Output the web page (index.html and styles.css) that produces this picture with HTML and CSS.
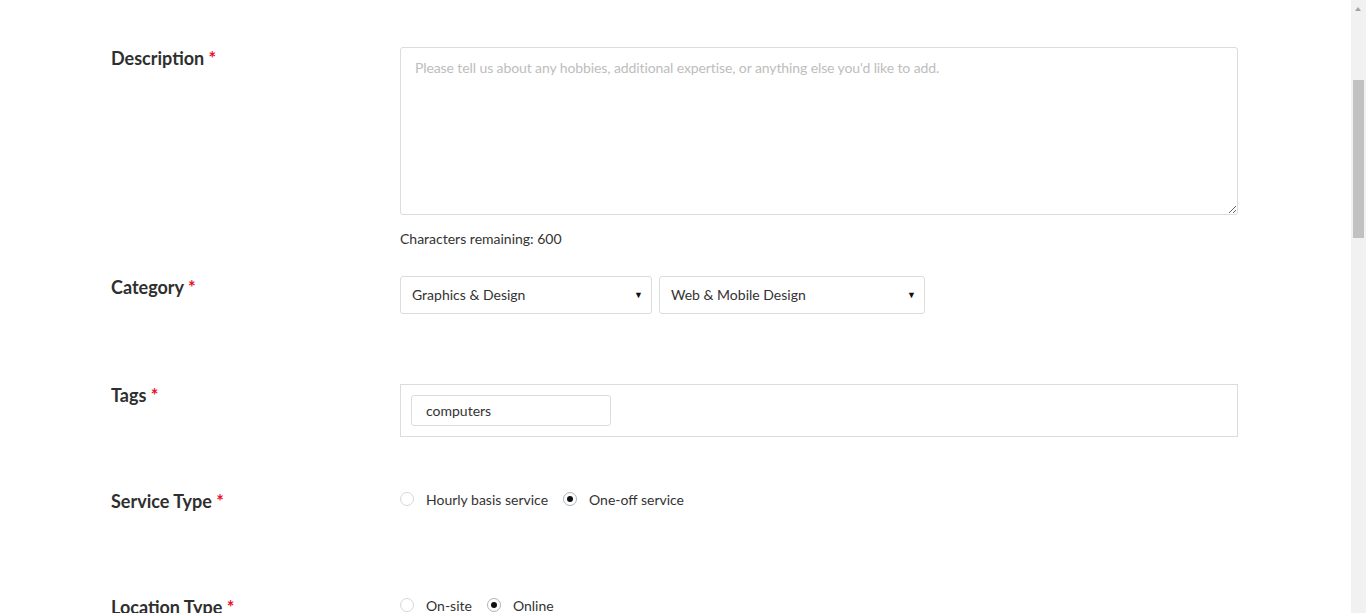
FILE: index.html
```html
<!DOCTYPE html>
<html lang="en">
<head>
<meta charset="utf-8">
<title>Service form</title>
<link rel="stylesheet" href="styles.css">
</head>
<body>
<div class="page">
  <form class="form">
    <div class="row row-desc">
      <div class="label">Description <span class="req">*</span></div>
      <div class="field">
        <textarea class="textarea" placeholder="Please tell us about any hobbies, additional expertise, or anything else you'd like to add."></textarea>
        <div class="counter">Characters remaining: 600</div>
      </div>
    </div>
    <div class="row row-cat">
      <div class="label">Category <span class="req">*</span></div>
      <div class="field selects">
        <div class="select sel-1"><span>Graphics &amp; Design</span><span class="caret">▼</span></div>
        <div class="select sel-2"><span>Web &amp; Mobile Design</span><span class="caret">▼</span></div>
      </div>
    </div>
    <div class="row row-tags">
      <div class="label">Tags <span class="req">*</span></div>
      <div class="field">
        <div class="tagbox"><div class="tag-input">computers</div></div>
      </div>
    </div>
    <div class="row row-service">
      <div class="label">Service Type <span class="req">*</span></div>
      <div class="field radios">
        <span class="radio"></span><span class="rlabel">Hourly basis service</span>
        <span class="radio checked"></span><span class="rlabel">One-off service</span>
      </div>
    </div>
    <div class="row row-loc">
      <div class="label">Location Type <span class="req">*</span></div>
      <div class="field radios">
        <span class="radio"></span><span class="rlabel">On-site</span>
        <span class="radio checked"></span><span class="rlabel">Online</span>
      </div>
    </div>
  </form>
  <div class="scrollbar">
    <div class="sb-up"></div>
    <div class="sb-thumb"></div>
  </div>
</div>
</body>
</html>
```
FILE: styles.css
```css
html, body {
  margin: 0;
  padding: 0;
  height: 100%;
  overflow: hidden;
  background: #fff;
}
body {
  font-family: Lato, "Open Sans", Arial, sans-serif;
  color: #333;
}
.page {
  position: relative;
  width: 1366px;
  height: 613px;
  overflow: hidden;
}
.form {
  width: 1351px;
  padding-left: 111px;
  padding-top: 47px;
  box-sizing: border-box;
}
.row {
  display: grid;
  grid-template-columns: 289px 838px;
}
.label {
  font-size: 18px;
  line-height: 24px;
  font-weight: bold;
  color: #2f2f2f;
  margin-top: -1px;
  white-space: nowrap;
}
.req {
  color: #e8112d;
  font-weight: bold;
}
.field {
  font-size: 14px;
}
.textarea {
  display: block;
  width: 838px;
  height: 168px;
  box-sizing: border-box;
  border: 1px solid #dcdcdc;
  border-radius: 3px;
  padding: 10px 14px;
  font-family: Lato, "Open Sans", Arial, sans-serif;
  font-size: 14px;
  letter-spacing: -0.1px;
  line-height: 20px;
  color: #333;
  resize: vertical;
  margin: 0;
}
.textarea::placeholder {
  color: #bdbdbd;
}
.counter {
  margin-top: 14px;
  line-height: 20px;
  color: #333;
}
.row-cat {
  margin-top: 27px;
}
.selects {
  display: flex;
  gap: 7px;
}
.select {
  height: 38px;
  box-sizing: border-box;
  border: 1px solid #dcdcdc;
  border-radius: 3px;
  display: flex;
  align-items: center;
  justify-content: space-between;
  padding: 0 8px 2px 11px;
  color: #333;
}
.sel-1 { width: 252px; }
.sel-2 { width: 266px; }
.caret {
  font-size: 9px;
  color: #111;
}
.row-tags {
  margin-top: 70px;
}
.tagbox {
  height: 53px;
  box-sizing: border-box;
  border: 1px solid #dcdcdc;
  padding: 10px;
}
.tag-input {
  width: 200px;
  height: 31px;
  box-sizing: border-box;
  border: 1px solid #dcdcdc;
  border-radius: 3px;
  padding-left: 14px;
  line-height: 29px;
  color: #333;
}
.row-service {
  margin-top: 53px;
}
.row-loc {
  margin-top: 83px;
}
.radios {
  display: flex;
  align-items: center;
  height: 20px;
  margin-top: -1px;
}
.radio {
  width: 14px;
  height: 14px;
  box-sizing: border-box;
  border: 1px solid #d6d6d6;
  border-radius: 50%;
  margin-right: 12px;
  position: relative;
  flex: none;
}
.radio.checked {
  border-color: #a9b4bd;
}
.radio.checked::after {
  content: "";
  position: absolute;
  left: 3px;
  top: 3px;
  width: 6px;
  height: 6px;
  border-radius: 50%;
  background: #111;
}
.rlabel {
  margin-right: 15px;
  color: #333;
  white-space: nowrap;
}
.scrollbar {
  position: absolute;
  top: 0;
  right: 0;
  width: 15px;
  height: 613px;
  background: #f1f1f1;
}
.sb-up {
  position: absolute;
  top: 7px;
  left: 4px;
  width: 0;
  height: 0;
  border-left: 3.5px solid transparent;
  border-right: 3.5px solid transparent;
  border-bottom: 4px solid #a3a3a3;
}
.sb-thumb {
  position: absolute;
  top: 80px;
  left: 2px;
  width: 11px;
  height: 158px;
  background: #c1c1c1;
}
```
